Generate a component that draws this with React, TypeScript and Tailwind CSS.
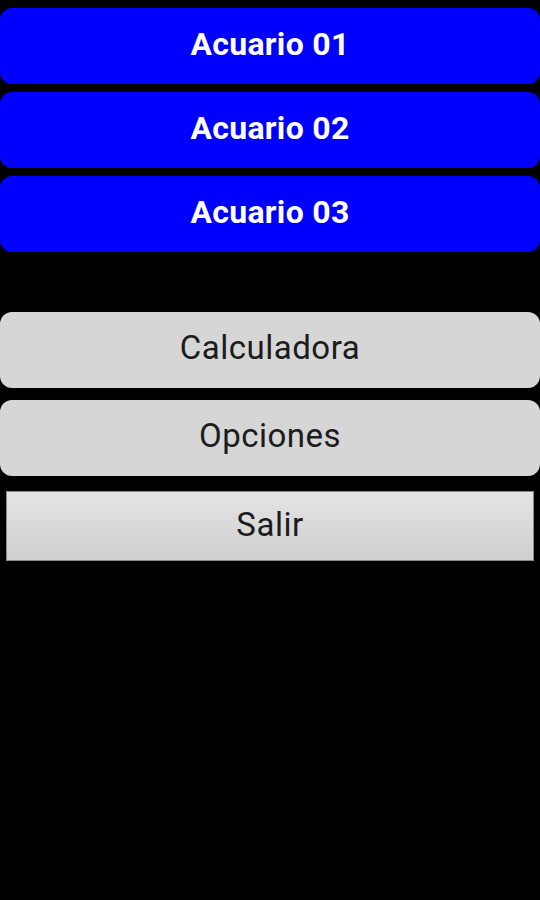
import React from "react";

export default function App() {
  const blue = ["Acuario 01", "Acuario 02", "Acuario 03"];
  return (
    <div className="w-[540px] h-[900px] bg-black flex flex-col" style={{ fontFamily: "Roboto, 'Noto Sans', sans-serif" }}>
      <div className="flex flex-col gap-[8px] pt-[8px]">
        {blue.map((t) => (
          <div key={t} className="h-[76px] bg-[#0000fe] rounded-[12px] flex items-center justify-center text-white font-bold text-[32px] tracking-[0.3px] pb-[4px]">
            {t}
          </div>
        ))}
      </div>
      <div className="flex flex-col gap-[12px] mt-[60px]">
        <div className="h-[76px] bg-[#d6d6d6] rounded-[12px] flex items-center justify-center text-[#1c1c1c] text-[33px] tracking-[0.5px] pb-[4px]">
          Calculadora
        </div>
        <div className="h-[76px] bg-[#d6d6d6] rounded-[12px] flex items-center justify-center text-[#1c1c1c] text-[33px] tracking-[0.5px] pb-[4px]">
          Opciones
        </div>
      </div>
      <div className="mt-[15px] mx-[6px] h-[70px] bg-gradient-to-b from-[#e4e4e4] to-[#cfcfcf] border border-[#8a8a8a] flex items-center justify-center text-[#1c1c1c] text-[33px] tracking-[0.5px] pb-[2px]">
        Salir
      </div>
    </div>
  );
}
